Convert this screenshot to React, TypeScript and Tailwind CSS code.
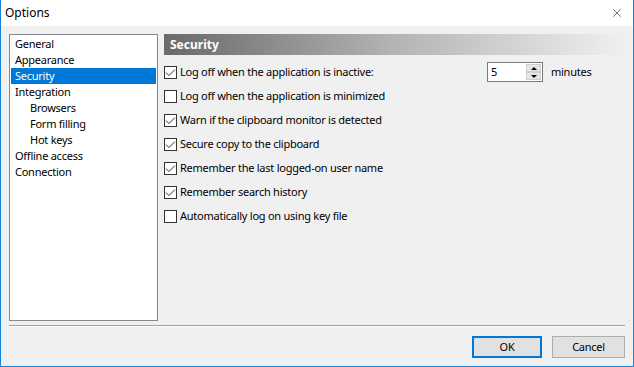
import { X } from "lucide-react";

// ─── Tree ───────────────────────────────────────────────────────────────────
const treeItems = [
    { label: "General", level: 0 },
    { label: "Appearance", level: 0 },
    { label: "Security", level: 0, selected: true },
    { label: "Integration", level: 0 },
    { label: "Browsers", level: 1 },
    { label: "Form filling", level: 1 },
    { label: "Hot keys", level: 1 },
    { label: "Offline access", level: 0 },
    { label: "Connection", level: 0 },
];

function Tree() {
    return (
        <div className="w-[149px] h-[287px] border border-[#828790] bg-white p-px">
            {treeItems.map((item) => (
                <div
                    key={item.label}
                    className={
                        "h-[16px] leading-[16px] " +
                        (item.level ? "pl-[19px] " : "pl-[4px] ") +
                        (item.selected ? "bg-[#0078d7] text-white" : "text-black")
                    }
                >
                    {item.label}
                </div>
            ))}
        </div>
    );
}

// ─── Checkbox ───────────────────────────────────────────────────────────────
function Check({ checked, label }: { checked: boolean; label: string }) {
    return (
        <div className="flex items-center">
            <div className="w-[13px] h-[13px] border border-[#333333] bg-white flex items-center justify-center">
                {checked && (
                    <svg width="11" height="11" viewBox="0 0 11 11">
                        <path d="M1 5.5 L4 8.5 L10 2.5" fill="none" stroke="#333333" strokeWidth="1" />
                    </svg>
                )}
            </div>
            <span className="ml-[3px]">{label}</span>
        </div>
    );
}

function SpinBox() {
    return (
        <div className="w-[56px] h-[20px] border border-[#7a7a7a] bg-white flex">
            <span className="flex-1 pl-[3px] leading-[18px]">5</span>
            <div className="w-[16px] flex flex-col py-px pr-px">
                <div className="flex-1 bg-[#e5e5e5] border border-[#cfcfcf] flex items-center justify-center">
                    <div className="w-0 h-0 border-x-[3px] border-x-transparent border-b-[3px] border-b-black" />
                </div>
                <div className="flex-1 bg-[#e5e5e5] border border-[#cfcfcf] flex items-center justify-center">
                    <div className="w-0 h-0 border-x-[3px] border-x-transparent border-t-[3px] border-t-black" />
                </div>
            </div>
        </div>
    );
}

// ─── Security page ──────────────────────────────────────────────────────────
function SecurityPage() {
    return (
        <div className="flex-1 flex flex-col">
            <div className="h-[21px] bg-gradient-to-r from-[#6a6a6a] via-[#b4b4b4] to-[#f0f0f0] pl-[6px] flex items-center text-white font-bold text-[12px] tracking-normal">
                Security
            </div>
            <div className="mt-[5px] flex flex-col">
                <div className="h-[24px] flex items-center">
                    <div className="w-[323px]">
                        <Check checked label="Log off when the application is inactive:" />
                    </div>
                    <SpinBox />
                    <span className="ml-[8px]">minutes</span>
                </div>
                <div className="h-[24px] flex items-center">
                    <Check checked={false} label="Log off when the application is minimized" />
                </div>
                <div className="h-[24px] flex items-center">
                    <Check checked label="Warn if the clipboard monitor is detected" />
                </div>
                <div className="h-[24px] flex items-center">
                    <Check checked label="Secure copy to the clipboard" />
                </div>
                <div className="h-[24px] flex items-center">
                    <Check checked label="Remember the last logged-on user name" />
                </div>
                <div className="h-[24px] flex items-center">
                    <Check checked label="Remember search history" />
                </div>
                <div className="h-[24px] flex items-center">
                    <Check checked={false} label="Automatically log on using key file" />
                </div>
            </div>
        </div>
    );
}

export default function App() {
    return (
        <div className="w-[634px] h-[367px] bg-[#f0f0f0] border-x border-b border-[#1883d7] flex flex-col text-[11px] tracking-[-0.25px] text-black font-['Noto_Sans',sans-serif]">
            {/* ─── Title bar ─── */}
            <div className="h-[26px] bg-white flex items-center justify-between pl-[4px] pr-[9px] text-[12px] tracking-normal">
                <span>Options</span>
                <X size={14} strokeWidth={1} color="#111" />
            </div>

            {/* ─── Body ─── */}
            <div className="flex-1 flex flex-col px-[8px] pt-[8px]">
                <div className="flex gap-[6px]">
                    <Tree />
                    <SecurityPage />
                </div>
                <div className="mt-[4px] h-[2px] border-t border-[#a0a0a0] border-b border-b-white" />
                <div className="flex justify-end gap-[10px] mt-[9px]">
                    <button className="w-[70px] h-[22px] bg-[#e1e1e1] border-2 border-[#0078d7]">OK</button>
                    <button className="w-[73px] h-[22px] bg-[#e1e1e1] border border-[#adadad]">Cancel</button>
                </div>
            </div>
        </div>
    );
}
